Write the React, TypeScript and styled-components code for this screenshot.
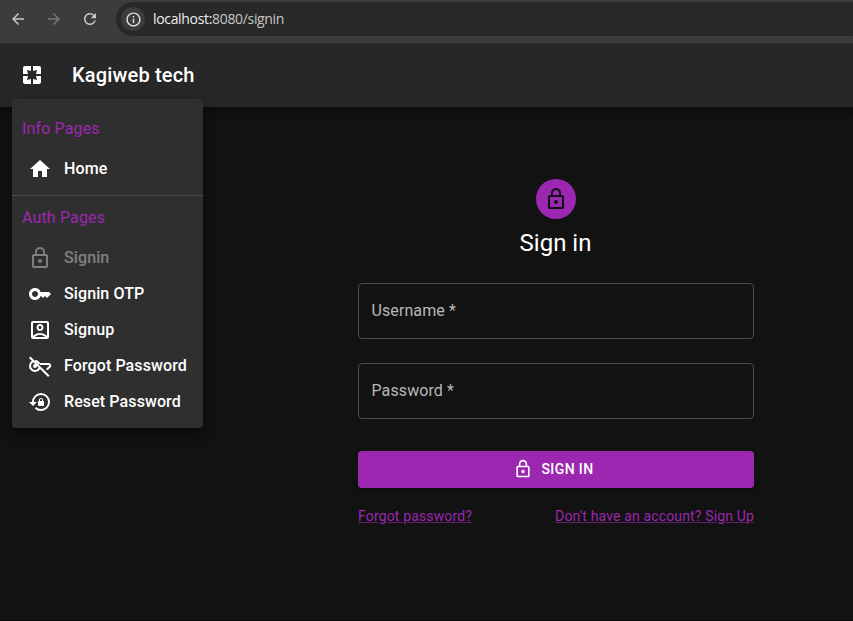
import React from "react";
import styled, { createGlobalStyle } from "styled-components";
import {
  MdArrowBack, MdArrowForward, MdRefresh, MdInfoOutline, MdHome, MdKey,
  MdOutlineAccountBox, MdLockReset,
} from "react-icons/md";

const Global = createGlobalStyle`
  *, *::before, *::after { box-sizing: border-box; }
  body { margin: 0; background: #121212; color: #fff; font-family: Roboto, sans-serif; overflow: hidden; }
`;

const Page = styled.div`
  position: relative;
  display: flex;
  flex-direction: column;
  height: 621px;
  overflow: hidden;
  border-bottom: 1px solid #0a0a0a;
`;

const BrowserBar = styled.div`
  display: flex;
  align-items: center;
  flex: none;
  height: 43px;
  padding: 0 0 4px 9px;
  background: #3c3c3c;
  border-bottom: 1px solid #474747;
`;

const NavIcon = styled.span<{ $dim?: boolean }>`
  display: flex;
  justify-content: center;
  width: 18px;
  margin-right: 18px;
  color: ${(p) => (p.$dim ? "#777" : "#c7c7c7")};
`;

const Address = styled.div`
  display: flex;
  align-items: center;
  flex: 1;
  height: 34px;
  margin-left: -1px;
  padding-left: 5px;
  background: #282828;
  border-radius: 17px 0 0 17px;
  font: 14px/20px "Open Sans", "Noto Sans", sans-serif;
  color: #c7c7c7;
  letter-spacing: -0.33px;
`;

const InfoBadge = styled.span`
  display: flex;
  align-items: center;
  justify-content: center;
  width: 24px;
  height: 24px;
  margin-right: 8px;
  border-radius: 50%;
  background: #3c3c3c;
  color: #e3e3e3;
`;

const Host = styled.span`
  color: #f0f0f0;
`;

const AppBar = styled.header`
  display: flex;
  align-items: center;
  flex: none;
  height: 64px;
  padding-left: 20px;
  gap: 28px;
  background: #272727;
  box-shadow: 0 2px 4px -1px rgba(0, 0, 0, 0.2), 0 4px 5px rgba(0, 0, 0, 0.14), 0 1px 10px rgba(0, 0, 0, 0.12);
`;

const Brand = styled.h1`
  margin: 0;
  font-size: 20px;
  font-weight: 500;
  line-height: 32px;
  letter-spacing: 0.17px;
`;

const Menu = styled.nav`
  position: absolute;
  top: 99px;
  left: 12px;
  width: 191px;
  height: 329px;
  padding: 8px 0;
  border-radius: 4px;
  background: #2f2f2f;
  box-shadow: 0 5px 5px -3px rgba(0, 0, 0, 0.2), 0 8px 10px 1px rgba(0, 0, 0, 0.14), 0 3px 14px 2px rgba(0, 0, 0, 0.12);
`;

const MenuHeading = styled.div`
  padding: 10px;
  height: 44px;
  color: #9c27b0;
  font-size: 16px;
  line-height: 24px;
  letter-spacing: 0.15px;
`;

const MenuItem = styled.a<{ $disabled?: boolean }>`
  display: flex;
  align-items: center;
  height: 36px;
  padding-left: 16px;
  gap: 12px;
  font-size: 16px;
  font-weight: 500;
  line-height: 24px;
  letter-spacing: 0.1px;
  color: #fff;
  opacity: ${(p) => (p.$disabled ? 0.38 : 1)};
  white-space: nowrap;
`;

const Divider = styled.hr`
  height: 1px;
  margin: 8px 0 0;
  border: 0;
  background: #4d4d4d;
`;

const Form = styled.form`
  display: flex;
  flex-direction: column;
  align-items: center;
  width: 396px;
  margin: 72px 0 0 358px;
`;

const Avatar = styled.div`
  display: flex;
  align-items: center;
  justify-content: center;
  width: 40px;
  height: 40px;
  border-radius: 50%;
  background: #9c27b0;
  color: #121212;
`;

const Title = styled.h2`
  margin: 8px 0 24px;
  padding-right: 1px;
  font-size: 24px;
  font-weight: 400;
  line-height: 32px;
`;

const Field = styled.label`
  display: flex;
  align-items: center;
  width: 100%;
  height: 56px;
  margin-bottom: 24px;
  padding: 0 12.5px 2px;
  border: 1px solid #4c4c4c;
  border-radius: 4px;
  color: #b8b8b8;
  font-size: 16px;
  letter-spacing: 0.1px;
`;

const Submit = styled.button`
  display: flex;
  align-items: center;
  justify-content: center;
  gap: 8px;
  width: 100%;
  height: 37px;
  margin: 8px 0 16px;
  padding: 0 5px 2px 0;
  border: 0;
  border-radius: 4px;
  background: #9c27b0;
  color: #fff;
  font: 500 14px/24px Roboto, sans-serif;
  letter-spacing: 0.4px;
  box-shadow: 0 3px 1px -2px rgba(0, 0, 0, 0.2), 0 2px 2px rgba(0, 0, 0, 0.14), 0 1px 5px rgba(0, 0, 0, 0.12);
`;

const Links = styled.div`
  display: flex;
  justify-content: space-between;
  width: 100%;
`;

const Link = styled.a`
  color: #9c27b0;
  font-size: 14px;
  line-height: 24px;
  letter-spacing: 0.15px;
  text-decoration: underline;
  text-decoration-color: rgba(156, 39, 176, 0.6);
`;

const LockIcon = ({ size = 24 }: { size?: number }) => (
  <svg width={size} height={size} viewBox="0 0 24 24" fill="currentColor">
    <path d="M12 17c1.1 0 2-.9 2-2s-.9-2-2-2-2 .9-2 2 .9 2 2 2m6-9h-1V6c0-2.76-2.24-5-5-5S7 3.24 7 6v2H6c-1.1 0-2 .9-2 2v10c0 1.1.9 2 2 2h12c1.1 0 2-.9 2-2V10c0-1.1-.9-2-2-2M8.9 6c0-1.71 1.39-3.1 3.1-3.1s3.1 1.39 3.1 3.1v2H8.9zM18 20H6V10h12z" />
  </svg>
);

const LogoIcon = () => (
  <svg width="24" height="24" viewBox="0 0 24 24" fill="currentColor">
    <path d="M3 5v6h5L7 7l4 1V3H5c-1.1 0-2 .9-2 2zm5 8H3v6c0 1.1.9 2 2 2h6v-5l-4 1 1-4zm9 4l-4-1v5h6c1.1 0 2-.9 2-2v-6h-5l1 4zm2-14h-6v5l4-1-1 4h5V5c0-1.1-.9-2-2-2z" />
  </svg>
);

const KeyOffIcon = () => (
  <svg width="24" height="24" viewBox="0 0 24 24" fill="none" stroke="currentColor" strokeWidth="2">
    <path d="M5.2 7.3A5 5 0 1 0 11.6 14" />
    <path d="M12.5 10H20.5C22.6 10 22.8 12.6 21.2 13.4L19.3 15" strokeLinecap="round" />
    <path d="M1.7 3.2L20.8 22.2" />
    <circle cx="7" cy="12" r="2" fill="currentColor" stroke="none" />
    <path d="M7 7A5 5 0 0 1 11.3 10" />
  </svg>
);

const authItems = [
  { label: "Signin", icon: <LockIcon />, disabled: true },
  { label: "Signin OTP", icon: <MdKey size={24} /> },
  { label: "Signup", icon: <MdOutlineAccountBox size={24} /> },
  { label: "Forgot Password", icon: <KeyOffIcon /> },
  { label: "Reset Password", icon: <MdLockReset size={24} /> },
];

export default function App() {
  return (
    <Page>
      <Global />
      <BrowserBar>
        <NavIcon><MdArrowBack size={18} /></NavIcon>
        <NavIcon $dim><MdArrowForward size={18} /></NavIcon>
        <NavIcon><MdRefresh size={18} /></NavIcon>
        <Address>
          <InfoBadge><MdInfoOutline size={17} /></InfoBadge>
          <Host>localhost:</Host>8080/signin
        </Address>
      </BrowserBar>
      <AppBar>
        <LogoIcon />
        <Brand>Kagiweb tech</Brand>
      </AppBar>
      <Form>
        <Avatar><LockIcon /></Avatar>
        <Title>Sign in</Title>
        <Field>Username *</Field>
        <Field>Password *</Field>
        <Submit type="button"><LockIcon size={20} />SIGN IN</Submit>
        <Links>
          <Link>Forgot password?</Link>
          <Link>Don't have an account? Sign Up</Link>
        </Links>
      </Form>
      <Menu>
        <MenuHeading>Info Pages</MenuHeading>
        <MenuItem><MdHome size={24} />Home</MenuItem>
        <Divider />
        <MenuHeading>Auth Pages</MenuHeading>
        {authItems.map((item) => (
          <MenuItem key={item.label} $disabled={item.disabled}>
            {item.icon}
            {item.label}
          </MenuItem>
        ))}
      </Menu>
    </Page>
  );
}
